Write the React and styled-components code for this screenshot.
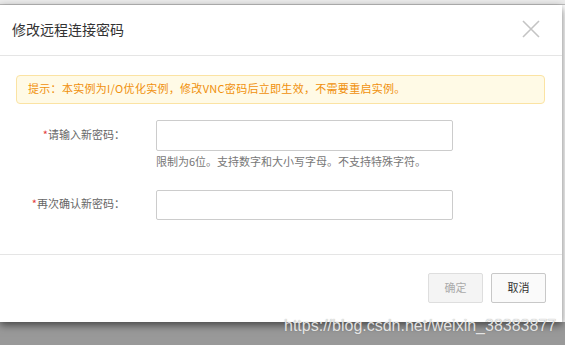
import React from "react";
import styled, { createGlobalStyle } from "styled-components";

const Global = createGlobalStyle`
  html, body { margin: 0; padding: 0; background: #ffffff; }
  body { font-family: "Noto Sans CJK SC", "Noto Sans", sans-serif; }
  * { box-sizing: border-box; }
`;

const Page = styled.div`
  position: relative;
  width: 565px;
  height: 345px;
  display: flex;
  flex-direction: column;
  overflow: hidden;
`;

const TopStrip = styled.div`
  height: 5px;
  background: #ebebeb;
  border-bottom: 1px solid #bdbdbd;
`;

const Dialog = styled.div`
  width: 562px;
  background: #ffffff;
  display: flex;
  flex-direction: column;
  position: relative;
  z-index: 1;
  box-shadow: 0 3px 8px rgba(0, 0, 0, 0.55);
`;

const Header = styled.div`
  height: 51px;
  border-bottom: 1px solid #e5e5e5;
  display: flex;
  align-items: center;
  justify-content: space-between;
  padding: 0 22px 0 12px;
`;

const Title = styled.div`
  font-size: 14px;
  color: #333333;
  line-height: 20px;
  margin-top: -2px;
`;

const Close = styled.button`
  width: 18px;
  height: 18px;
  padding: 0;
  border: 0;
  background: transparent;
  display: flex;
  margin-top: -3px;
`;

const Body = styled.div`
  padding: 19px 17px 34px 16px;
`;

const Alert = styled.div`
  height: 29px;
  border: 1px solid #fbe3a3;
  background: #fffae6;
  border-radius: 4px;
  color: #f0900c;
  font-size: 11px;
  line-height: 25px;
  padding-left: 11px;
  letter-spacing: 0.3px;
`;

const Form = styled.div`
  margin-top: 16px;
  display: grid;
  grid-template-columns: 109px 297px;
  column-gap: 31px;
  align-items: center;
`;

const Label = styled.label`
  font-size: 11px;
  color: #666666;
  text-align: right;
  line-height: 14px;
  padding-bottom: 4px;
  margin-top: ${(p) => p.$top || 0}px;
`;

const Star = styled.span`
  color: #e4393c;
`;

const Input = styled.input`
  height: ${(p) => p.$h || 30}px;
  width: 297px;
  border: 1px solid #cccccc;
  border-radius: 2px;
  outline: none;
  margin-top: ${(p) => p.$top || 0}px;
`;

const Help = styled.div`
  grid-column: 2;
  font-size: 11px;
  color: #777777;
  line-height: 14px;
  margin-top: 3px;
  white-space: nowrap;
`;

const Footer = styled.div`
  border-top: 1px solid #e5e5e5;
  display: flex;
  justify-content: flex-end;
  gap: 8px;
  padding: 18px 16px 19px 0;
`;

const Button = styled.button`
  width: 55px;
  height: 30px;
  border-radius: 2px;
  font-family: inherit;
  font-size: 11px;
  padding: 0 0 2px;
  border: 1px solid ${(p) => (p.disabled ? "#dedede" : "#c8c8c8")};
  background: ${(p) => (p.disabled ? "#f4f4f4" : "#fafafa")};
  color: ${(p) => (p.disabled ? "#aaaaaa" : "#333333")};
`;

const Backdrop = styled.div`
  flex: 1;
  background: #999999;
`;

const Watermark = styled.div`
  position: absolute;
  left: 284px;
  top: 316px;
  z-index: 2;
  font-family: "Liberation Sans", Arial, sans-serif;
  font-size: 16px;
  line-height: 20px;
  color: rgba(240, 240, 240, 0.92);
  text-shadow: 0 0 1px rgba(90, 90, 90, 0.6);
  white-space: nowrap;
`;

export default function App() {
  return (
    <Page>
      <Global />
      <TopStrip />
      <Dialog>
        <Header>
          <Title>修改远程连接密码</Title>
          <Close aria-label="close">
            <svg width="18" height="18" viewBox="0 0 18 18">
              <path d="M1 1 L17 17 M17 1 L1 17" stroke="#c4c4c4" strokeWidth="1.6" fill="none" />
            </svg>
          </Close>
        </Header>
        <Body>
          <Alert>提示：本实例为I/O优化实例，修改VNC密码后立即生效，不需要重启实例。</Alert>
          <Form>
            <Label><Star>*</Star>请输入新密码：</Label>
            <Input type="password" $h={31} />
            <Help>限制为6位。支持数字和大小写字母。不支持特殊字符。</Help>
            <Label $top={22}><Star>*</Star>再次确认新密码：</Label>
            <Input type="password" $top={22} />
          </Form>
        </Body>
        <Footer>
          <Button disabled>确定</Button>
          <Button>取消</Button>
        </Footer>
      </Dialog>
      <Backdrop />
      <Watermark>https://blog.csdn.net/weixin_38383877</Watermark>
    </Page>
  );
}
